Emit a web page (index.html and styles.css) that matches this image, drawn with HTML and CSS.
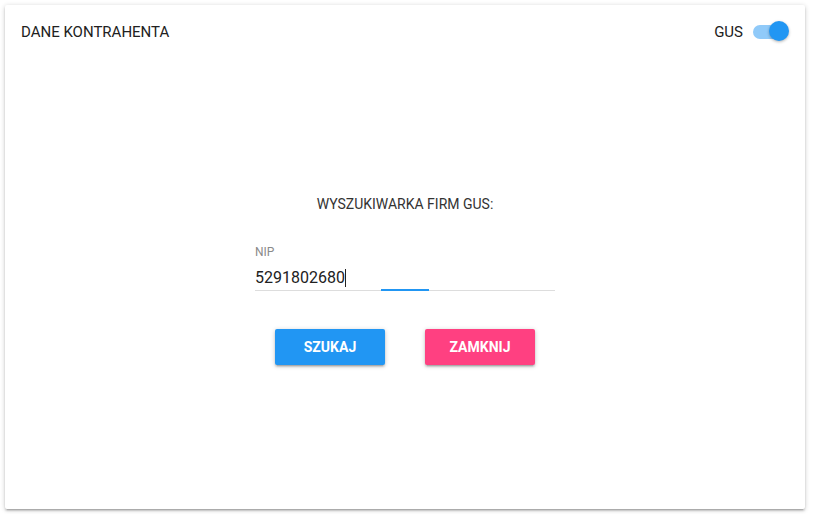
FILE: index.html
```html
<!DOCTYPE html>
<html lang="pl">
<head>
<meta charset="utf-8">
<title>Dane kontrahenta</title>
<link rel="stylesheet" href="styles.css">
</head>
<body>
<div class="card">
  <div class="card-header">
    <div class="title">DANE KONTRAHENTA</div>
    <div class="gus">
      <span class="gus-label">GUS</span>
      <span class="toggle"><span class="track"></span><span class="thumb"></span></span>
    </div>
  </div>
  <div class="card-body">
    <div class="heading">WYSZUKIWARKA FIRM GUS:</div>
    <div class="field">
      <div class="field-label">NIP</div>
      <div class="field-input">5291802680<span class="caret"></span></div>
      <div class="underline"><span class="focus-bar"></span></div>
    </div>
    <div class="actions">
      <button class="btn btn-primary">SZUKAJ</button>
      <button class="btn btn-accent">ZAMKNIJ</button>
    </div>
  </div>
</div>
</body>
</html>
```
FILE: styles.css
```css
* { box-sizing: border-box; }
html, body { margin: 0; padding: 0; background: #fff; }
body {
  font-family: Roboto, "Noto Sans", "Liberation Sans", sans-serif;
  color: #212121;
  padding: 5px;
}
.card {
  width: 800px;
  height: 504px;
  background: #fff;
  border-radius: 2px;
  box-shadow: 0 2px 2px 0 rgba(0,0,0,.14), 0 3px 1px -2px rgba(0,0,0,.12), 0 1px 5px 0 rgba(0,0,0,.2);
  display: flex;
  flex-direction: column;
}
.card-header {
  height: 54px;
  padding: 0 16px;
  display: flex;
  align-items: center;
  justify-content: space-between;
}
.title {
  font-size: 15px;
  font-weight: 400;
  line-height: 20px;
  color: #212121;
}
.gus { display: flex; align-items: center; }
.gus-label {
  font-size: 15px;
  font-weight: 400;
  line-height: 20px;
  margin-right: 10px;
}
.toggle {
  position: relative;
  width: 36px;
  height: 20px;
  display: inline-block;
}
.track {
  position: absolute;
  left: 0; top: 3px;
  width: 34px; height: 14px;
  border-radius: 7px;
  background: #90caf9;
}
.thumb {
  position: absolute;
  left: 16px; top: -1px;
  width: 20px; height: 20px;
  border-radius: 50%;
  background: #2196f3;
  box-shadow: 0 1px 3px rgba(0,0,0,.3);
}
.card-body {
  display: flex;
  flex-direction: column;
  align-items: center;
  padding-top: 135px;
}
.heading {
  font-size: 14px;
  line-height: 20px;
  color: #333;
}
.field {
  width: 300px;
  margin-top: 30px;
}
.field-label {
  font-size: 12px;
  line-height: 16px;
  color: #8a8a8a;
}
.field-input {
  margin-top: 6px;
  font-size: 16px;
  line-height: 24px;
  color: #212121;
  display: flex;
  align-items: center;
}
.caret {
  display: inline-block;
  width: 1px;
  height: 18px;
  background: #212121;
}
.underline {
  position: relative;
  height: 1px;
  background: #ddd;
}
.focus-bar {
  position: absolute;
  left: 126px;
  top: -1px;
  width: 48px;
  height: 2px;
  background: #2196f3;
}
.actions {
  margin-top: 38px;
  display: flex;
  gap: 40px;
}
.btn {
  width: 110px;
  height: 36px;
  border: none;
  border-radius: 2px;
  color: #fff;
  font-family: inherit;
  font-size: 14px;
  font-weight: 700;
  box-shadow: 0 2px 2px 0 rgba(0,0,0,.14), 0 3px 1px -2px rgba(0,0,0,.12), 0 1px 5px 0 rgba(0,0,0,.2);
  padding: 0;
}
.btn-primary { background: #2196f3; }
.btn-accent { background: #ff4081; }
```
